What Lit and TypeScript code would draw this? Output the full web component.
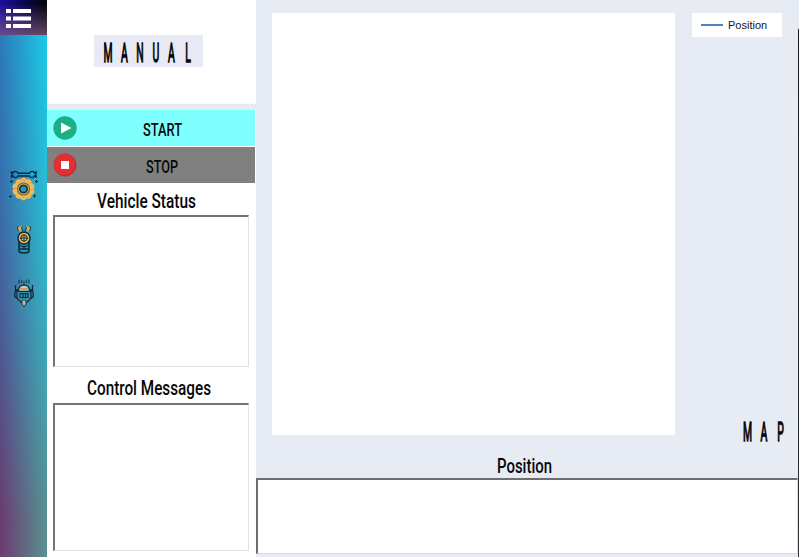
import { LitElement, html, svg, css } from "lit";
import { customElement, property } from "lit/decorators.js";

/** Condensed label: the text is set to an exact width inside its own box. */
@customElement("narrow-label")
class NarrowLabel extends LitElement {
  @property() text = "";
  @property({ type: Number }) width = 100;
  @property({ type: Number }) size = 20;
  static styles = css`
    :host { display: block; line-height: 0; }
    svg { display: block; overflow: visible; }
    text { font-family: Roboto, "Liberation Sans", sans-serif; font-weight: 500; fill: #080808; }
  `;
  render() {
    return html`<svg width=${this.width} height="24">
      <text x="0" y="19" font-size=${this.size} textLength=${this.width} lengthAdjust="spacingAndGlyphs">${this.text}</text>
    </svg>`;
  }
}

/** Tall, widely spaced capitals. Centers are the horizontal middle of each letter. */
@customElement("tall-title")
class TallTitle extends LitElement {
  @property() text = "";
  @property({ type: Array }) centers: number[] = [];
  @property({ type: Number }) width = 100;
  static styles = css`
    :host { display: block; line-height: 0; }
    svg { display: block; overflow: visible; }
    text {
      font-family: Roboto, "Liberation Sans", sans-serif; font-weight: 400; font-size: 26px;
      text-anchor: middle; fill: #050505; stroke: #050505; stroke-width: 1px; vector-effect: non-scaling-stroke;
    }
  `;
  render() {
    const k = 0.4;
    return html`<svg width=${this.width} height="19">
      <text transform="scale(${k} 1)" x=${this.centers.map((c) => (c / k).toFixed(1)).join(" ")} y="18.700">${this.text}</text>
    </svg>`;
  }
}

const teeth = Array.from({ length: 10 }, (_, i) => i * 36);

const gearIcon = svg`<svg class="tool" width="30" height="32" viewBox="0 0 30 32">
  <path d="M2 1.500 4 2.800 5.500 1.500Q8 1 9 3.200H20.500Q21.500 1 24 1.500L25.500 2.800 27.500 1.500M2 7.500 4 6 5.500 7.500Q8 8 9 6H20.500Q21.500 8 24 7.500L25.500 6 27.500 7.500M2 1.500l1 3-1 3M27.500 1.500l-1 3 1 3" fill="none" stroke="#0d2a48" stroke-width="1.400"/>
  ${teeth.map((a) => svg`<rect x="12" y="7.800" width="5" height="5" rx="1.600" fill="#f0b957" transform="rotate(${a} 14.500 19)"/>`)}
  <circle cx="14.500" cy="19" r="10.200" fill="#f0b957"/>
  <circle cx="14.500" cy="19" r="6" fill="none" stroke="#6d603f" stroke-width="1.200"/>
  <circle cx="14.500" cy="19" r="8.300" fill="none" stroke="#9b7945" stroke-width=".800" stroke-dasharray="1 5.500"/>
  <circle cx="14.500" cy="19" r="3.700" fill="#2a95b8" stroke="#153246" stroke-width="1.700"/>
  <path d="M2.500 10v3M1 11.500h3M27.500 10v3M26 11.500h3M1.500 25v3M0 26.500h3M25.500 24.500v3M24 26h3" stroke="#123452" stroke-width="1.100"/>
</svg>`;

const remoteIcon = svg`<svg class="tool" width="14" height="29" viewBox="0 0 14 29">
  <path d="M1.200 1.500Q0 3.500 1.200 5.500L4.500 7V1ZM12.800 1.500q1.200 2 0 4L9.500 7V1Z" fill="#c9b653"/>
  <path d="M1.200 1Q-.2 3.500 1.200 6M12.800 1q1.400 2.500 0 5M5 2q-1 1.500 1 4M9 2q1 1.500-1 4" fill="none" stroke="#12303e" stroke-width="1"/>
  <path d="M2 17v8.500q0 2.500 5 2.500t5-2.500V17" fill="#2797b5" stroke="#10283a" stroke-width="1.600"/>
  <circle cx="7" cy="13" r="6" fill="#e8be58" stroke="#10283a" stroke-width="1.500"/>
  <path d="M7 9v8M3 13h8" stroke="#10283a" stroke-width="1"/>
  <circle cx="7" cy="13" r="3.200" fill="none" stroke="#10283a" stroke-width="1"/>
  <path d="M3 20.500q4 2 8 0M3 24h8M7 21.500V24" fill="none" stroke="#10283a" stroke-width="1.300"/>
</svg>`;

const robotIcon = svg`<svg class="tool robot" width="20" height="28" viewBox="0 0 20 28">
  <path d="M5.500 .5Q4 2.500 5.500 4.500M8 1q-1.200 1.300 0 3M14.500 .5q1.500 2 0 4M12 1q1.200 1.300 0 3M10 2v4" fill="none" stroke="#164052" stroke-width="1.100"/>
  <path d="M1.500 6v5h3M18.500 6v5h-3M2.500 11.500.8 13.500v4l2.200 2M17.500 11.500l1.700 2v4l-2.200 2" fill="none" stroke="#10283a" stroke-width="1.300"/>
  <path d="M4.500 11Q5 6 10 6t5.500 5l1.500 2v6l-3.500 4h-7L3 19v-6Z" fill="#3a91a8" stroke="#10283a" stroke-width="1.200"/>
  <path d="M5.500 10.500Q6 7 10 7t4.500 3.500v1h-9Z" fill="#d9cda1"/>
  <path d="M6 10h8" stroke="#d5903d" stroke-width="1.500"/>
  <path d="M3.500 12.500h13M6 14.500v4h8v-4ZM9 14.500v4M11.500 14.500v4" fill="none" stroke="#10283a" stroke-width="1.100"/>
  <path d="M8 21.500q2-1.500 4 0v3.500l-2 2.500L8 25Z" fill="#b9bdaf" stroke="#183343" stroke-width="1"/>
</svg>`;

@customElement("app-root")
class AppRoot extends LitElement {
  static styles = css`
    * { box-sizing: border-box; }
    :host { display: grid; grid-template-columns: 47px 209px 542px 1px; width: 799px; height: 557px; overflow: hidden; background: #fff; }
    svg { display: block; }
    .rail {
      display: flex; flex-direction: column; align-items: center;
      background: linear-gradient(90deg, #6c3a70, #589191);
      position: relative; isolation: isolate;
    }
    .rail::before {
      content: ""; position: absolute; inset: 0; z-index: -1;
      background: linear-gradient(90deg, #2d78b8, #1bc9e6);
      -webkit-mask-image: linear-gradient(#000 8%, rgba(0,0,0,.8) 36%, rgba(0,0,0,.5) 60%, transparent 94%);
      mask-image: linear-gradient(#000 8%, rgba(0,0,0,.8) 36%, rgba(0,0,0,.5) 60%, transparent 94%);
    }
    .menu { width: 47px; height: 35px; padding: 9px 0 0 6px; background: linear-gradient(180deg, transparent 10%, rgba(137,99,135,.7)), linear-gradient(90deg, #1c10a0, #0b0548 55%, #030308); }
    .tools { display: flex; flex-direction: column; align-items: center; padding-top: 135px; }
    .tool + .tool { margin-top: 23px; }
    .tool + .robot { margin-top: 25px; }
    .side { display: flex; flex-direction: column; background: #fff; }
    .head { height: 104px; padding: 35px 0 0 47px; }
    .mode { width: 109px; height: 32px; padding: 8px 0 0 10px; background: #e7eaf4; }
    .gap { height: 6px; background: linear-gradient(#e8e9ec 50%, #dfedf5 50%); }
    .btn { position: relative; display: flex; justify-content: center; width: 208px; height: 36px; padding: 7px 0 0 23px; }
    .start { background: #80ffff; margin-bottom: 1px; }
    .stop { background: #808080; padding-right: 1px; }
    .badge { position: absolute; left: 6px; top: 6px; }
    .caption { display: flex; justify-content: center; height: 32px; padding: 6px 11px 0 0; }
    .second { height: 36px; padding: 9px 5px 0 0; }
    .first { padding-right: 10px; }
    .log { margin-left: 6px; width: 196px; border: 1px solid #dfe2e7; border-top: 2px solid #747474; border-left: 2px solid #747474; background: #fff; }
    .status { height: 152px; }
    .control { height: 148px; }
    .main { display: flex; flex-direction: column; background: #e7ebf4; }
    .stage { display: flex; justify-content: space-between; height: 435px; padding: 13px 16px 0; flex: none; }
    .plot { width: 403px; height: 422px; background: #fff; }
    .aside { display: flex; flex-direction: column; justify-content: space-between; width: 90px; }
    .legend { display: flex; align-items: center; height: 24px; gap: 5px; padding-left: 9px; background: #fff; color: #151515; font: 11px "Liberation Sans", Arial, sans-serif; }
    .line { width: 22px; height: 2px; background: #4f83b8; }
    .map { height: 13px; padding-left: 50px; }
    .poshead { display: flex; justify-content: center; height: 43px; padding: 19px 6px 0 0; flex: none; }
    .pos { height: 76px; flex: none; border: 1px solid #d9dde3; border-top: 2px solid #6e6e6e; border-left: 2px solid #6e6e6e; background: #fff; }
    .edge { background: linear-gradient(#e7ebf4 28px, #17171b 30px, #303238); }
  `;
  render() {
    return html`
      <nav class="rail">
        <div class="menu">
          <svg width="26" height="20" fill="#fff"><path d="M0 0h5v4H0zM7 0h18v4H7zM0 7.500h5v4H0zM7 7.500h18v4H7zM0 15h5v4H0zM7 15h18v4H7z"/></svg>
        </div>
        <div class="tools">${gearIcon}${remoteIcon}${robotIcon}</div>
      </nav>
      <section class="side">
        <div class="head"><div class="mode"><tall-title text="MANUAL" .centers=${[4, 20.5, 36, 52, 67.5, 84]} .width=${88}></tall-title></div></div>
        <div class="gap"></div>
        <div class="btn start">
          <svg class="badge" width="24" height="24"><circle cx="12" cy="12" r="11.700" fill="#1baf86"/><path d="M8 6.500 18.500 12 8 17.500Z" fill="#fff"/></svg>
          <narrow-label text="START" .width=${39} .size=${17.8}></narrow-label>
        </div>
        <div class="btn stop">
          <svg class="badge" width="24" height="24"><circle cx="12" cy="12" r="11.400" fill="#b92b2d"/><circle cx="11.500" cy="11.500" r="10.800" fill="#e22f33"/><rect x="8" y="8" width="8" height="8" fill="#fff"/></svg>
          <narrow-label text="STOP" .width=${32} .size=${17.8}></narrow-label>
        </div>
        <div class="caption first"><narrow-label text="Vehicle Status" .width=${99} .size=${20}></narrow-label></div>
        <div class="log status"></div>
        <div class="caption second"><narrow-label text="Control Messages" .width=${124} .size=${20}></narrow-label></div>
        <div class="log control"></div>
      </section>
      <main class="main">
        <div class="stage">
          <div class="plot"></div>
          <div class="aside">
            <div class="legend"><span class="line"></span>Position</div>
            <div class="map"><tall-title text="MAP" .centers=${[5.5, 22, 38.5]} .width=${42}></tall-title></div>
          </div>
        </div>
        <div class="poshead"><narrow-label text="Position" .width=${55} .size=${20.5}></narrow-label></div>
        <div class="pos"></div>
      </main>
      <div class="edge"></div>
    `;
  }
}
